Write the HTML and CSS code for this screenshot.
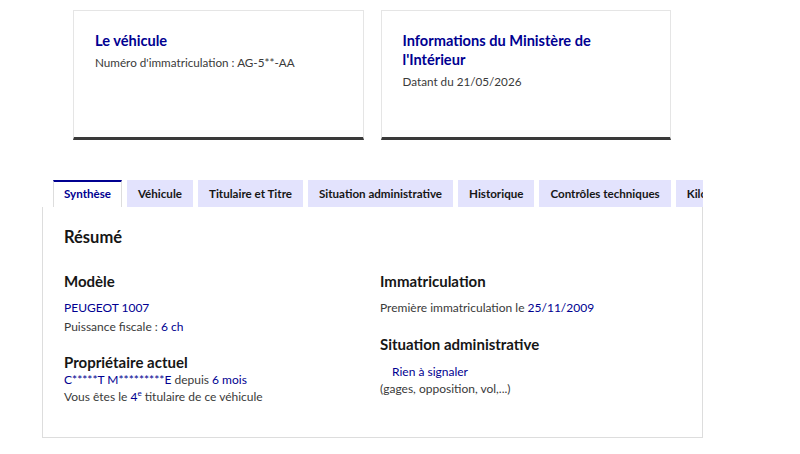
FILE: index.html
```html
<!DOCTYPE html>
<html lang="fr">
<head>
<meta charset="utf-8">
<link rel="stylesheet" href="styles.css">
</head>
<body>
<div class="cards">
  <div class="card">
    <h3 class="card-title">Le véhicule</h3>
    <p class="card-desc">Numéro d'immatriculation : AG-5**-AA</p>
  </div>
  <div class="card">
    <h3 class="card-title">Informations du Ministère de l'Intérieur</h3>
    <p class="card-desc">Datant du 21/05/2026</p>
  </div>
</div>

<div class="tabs">
  <ul class="tab-list">
    <li class="tab active">Synthèse</li>
    <li class="tab">Véhicule</li>
    <li class="tab">Titulaire et Titre</li>
    <li class="tab">Situation administrative</li>
    <li class="tab">Historique</li>
    <li class="tab">Contrôles techniques</li>
    <li class="tab">Kilométrage</li>
  </ul>
  <div class="panel">
    <h2 class="panel-title">Résumé</h2>
    <div class="grid">
      <div class="col">
        <h4 class="sec-title">Modèle</h4>
        <p class="line blue gap-title">PEUGEOT 1007</p>
        <p class="line gap-line">Puissance fiscale : <span class="blue">6 ch</span></p>
        <h4 class="sec-title gap-section">Propriétaire actuel</h4>
        <p class="line"><span class="blue">C*****T M*********E</span> depuis <span class="blue">6 mois</span></p>
        <p class="line">Vous êtes le <span class="blue">4<sup>e</sup></span> titulaire de ce véhicule</p>
      </div>
      <div class="col">
        <h4 class="sec-title">Immatriculation</h4>
        <p class="line gap-title">Première immatriculation le <span class="blue">25/11/2009</span></p>
        <h4 class="sec-title gap-section-r">Situation administrative</h4>
        <p class="line blue gap-title-sm indent">Rien à signaler</p>
        <p class="line">(gages, opposition, vol,...)</p>
      </div>
    </div>
  </div>
</div>
</body>
</html>
```

FILE: styles.css
```css
* { box-sizing: border-box; }
html, body { margin: 0; padding: 0; background: #fff; }
body {
  font-family: "Lato", "Noto Sans", sans-serif;
  color: #3a3a3a;
  width: 800px;
}
p, h2, h3, h4, ul { margin: 0; padding: 0; }

.cards {
  display: flex;
  gap: 17px;
  margin: 10px 0 0 73px;
  width: 598px;
}
.card {
  flex: 1;
  height: 130px;
  border: 1px solid #e5e5e5;
  border-bottom: 3px solid #3a3a3a;
  padding: 20px 22px 0 21px;
}
.card-title {
  font-size: 14.6px;
  line-height: 19px;
  font-weight: 700;
  color: #000091;
  width: 220px;
}
.card-desc {
  font-size: 11.7px;
  line-height: 18px;
  margin-top: 3px;
  color: #3a3a3a;
}

.tabs {
  margin: 40px 0 0 42px;
  width: 661px;
}
.tab-list {
  list-style: none;
  display: flex;
  gap: 5px;
  padding-left: 11px;
  overflow: hidden;
  height: 27px;
}
.tab {
  flex: none;
  height: 27px;
  padding: 0 11px;
  background: #e3e3fd;
  color: #161616;
  font-size: 11.6px;
  font-weight: 700;
  line-height: 27px;
  white-space: nowrap;
}
.tab.active {
  background: #fff;
  color: #000091;
  border-top: 2px solid #000091;
  border-left: 1px solid #ddd;
  border-right: 1px solid #ddd;
  line-height: 24px;
  padding: 0 10px;
}
.panel {
  border: 1px solid #dddddd;
  border-top: none;
  height: 231px;
  padding: 19px 22px 0 21px;
}
.panel-title {
  font-size: 16.5px;
  line-height: 22px;
  font-weight: 700;
  color: #161616;
}
.grid {
  display: grid;
  grid-template-columns: 300px 300px;
  column-gap: 16px;
  margin-top: 24px;
}
.sec-title {
  font-size: 15px;
  line-height: 18px;
  font-weight: 700;
  color: #161616;
}
.line {
  font-size: 12px;
  line-height: 17px;
}
.gap-title { margin-top: 9px; }
.gap-title-sm { margin-top: 10px; }
.gap-line { margin-top: 2px; }
.gap-section { margin-top: 18px; }
.gap-section-r { margin-top: 19px; }
.blue { color: #000091; }
.indent { padding-left: 12px; }
sup { font-size: 8px; line-height: 0; }
```
